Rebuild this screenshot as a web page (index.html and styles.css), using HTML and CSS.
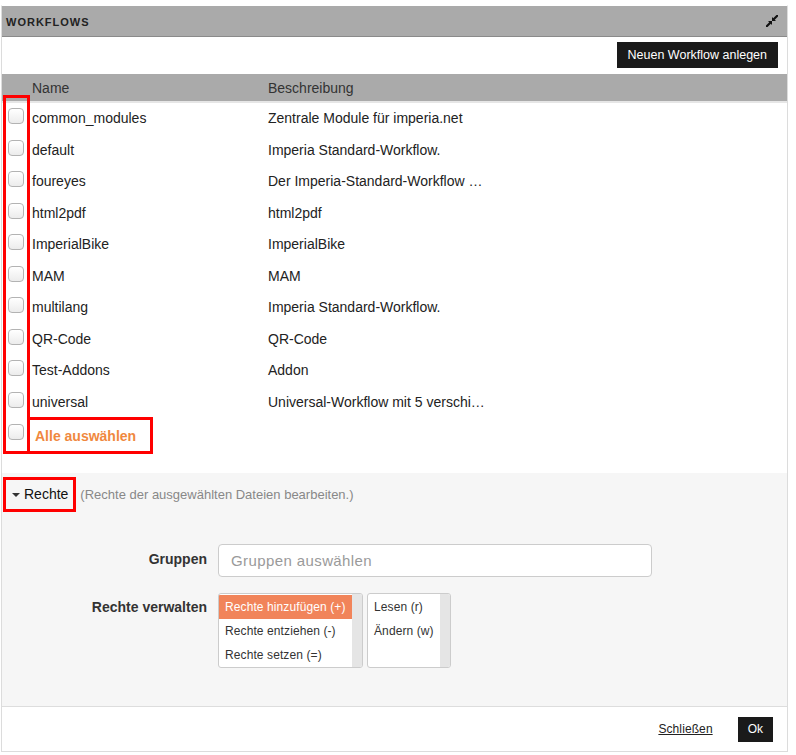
FILE: index.html
```html
<!DOCTYPE html>
<html lang="de">
<head>
<meta charset="utf-8">
<title>Workflows</title>
<link rel="stylesheet" href="styles.css">
</head>
<body>
<div class="page">
  <div class="panel">
    <div class="panel-head">
      <span class="panel-title">WORKFLOWS</span>
      <svg class="collapse-icon" width="12" height="12" viewBox="0 0 12 12" aria-hidden="true">
        <path d="M11.5 0.5 L8 4" stroke="#111" stroke-width="2.2" stroke-linecap="square"/>
        <polygon points="6,6 6,2 10,6" fill="#111"/>
        <path d="M0.5 11.5 L4 8" stroke="#111" stroke-width="2.2" stroke-linecap="square"/>
        <polygon points="6,6 6,10 2,6" fill="#111"/>
      </svg>
    </div>

    <div class="toolbar">
      <button class="btn-dark btn-new">Neuen Workflow anlegen</button>
    </div>

    <div class="list">
      <div class="list-head">
        <span></span>
        <span>Name</span>
        <span>Beschreibung</span>
      </div>
      <div class="row"><span class="cb"></span><span>common_modules</span><span>Zentrale Module für imperia.net</span></div>
      <div class="row"><span class="cb"></span><span>default</span><span>Imperia Standard-Workflow.</span></div>
      <div class="row"><span class="cb"></span><span>foureyes</span><span>Der Imperia-Standard-Workflow …</span></div>
      <div class="row"><span class="cb"></span><span>html2pdf</span><span>html2pdf</span></div>
      <div class="row"><span class="cb"></span><span>ImperialBike</span><span>ImperialBike</span></div>
      <div class="row"><span class="cb"></span><span>MAM</span><span>MAM</span></div>
      <div class="row"><span class="cb"></span><span>multilang</span><span>Imperia Standard-Workflow.</span></div>
      <div class="row"><span class="cb"></span><span>QR-Code</span><span>QR-Code</span></div>
      <div class="row"><span class="cb"></span><span>Test-Addons</span><span>Addon</span></div>
      <div class="row"><span class="cb"></span><span>universal</span><span>Universal-Workflow mit 5 verschi…</span></div>
      <div class="select-all"><span class="cb"></span><span class="select-all-label">Alle auswählen</span></div>
    </div>

    <div class="rights">
      <div class="rights-bar">
        <span class="toggle"><span class="caret"></span>Rechte</span>
        <span class="hint">(Rechte der ausgewählten Dateien bearbeiten.)</span>
      </div>
      <div class="form">
        <label class="form-label label-groups">Gruppen</label>
        <input class="groups-input" type="text" placeholder="Gruppen auswählen">
        <label class="form-label label-rights">Rechte verwalten</label>
        <div class="selects">
          <div class="listbox listbox-mode">
            <div class="options">
              <div class="option selected">Rechte hinzufügen (+)</div>
              <div class="option">Rechte entziehen (-)</div>
              <div class="option">Rechte setzen (=)</div>
            </div>
            <div class="scroll"></div>
          </div>
          <div class="listbox listbox-perm">
            <div class="options">
              <div class="option">Lesen (r)</div>
              <div class="option">Ändern (w)</div>
            </div>
            <div class="scroll"></div>
          </div>
        </div>
      </div>
    </div>

    <div class="footer">
      <a class="link" href="#">Schließen</a>
      <button class="btn-dark btn-ok">Ok</button>
    </div>

    <div class="mark mark-checks"></div>
    <div class="mark mark-all"></div>
    <div class="mark mark-toggle"></div>
  </div>
</div>
</body>
</html>
```

FILE: styles.css
```css
* { box-sizing: border-box; }

html, body {
  margin: 0;
  padding: 0;
  background: #fff;
  font-family: "Liberation Sans", Arial, sans-serif;
  color: #222;
}

.page {
  padding: 5px 0 0 1px;
}

.panel {
  position: relative;
  width: 787px;
  border: 1px solid #dcdcdc;
  border-top: 1px solid #fff;
  background: #fff;
}

.panel-head {
  height: 31px;
  background: #aaaaaa;
  border-bottom: 1px solid #8a8a8a;
  display: flex;
  align-items: center;
  justify-content: space-between;
  padding: 2px 9px 0 4px;
}

.panel-title {
  font-size: 11px;
  font-weight: bold;
  letter-spacing: 1px;
  color: #222;
}

.collapse-icon { display: block; margin-top: -3px; }

.toolbar {
  display: flex;
  justify-content: flex-end;
  padding: 5px 9px 6px 0;
}

.btn-dark {
  font-family: "Liberation Sans", Arial, sans-serif;
  font-size: 12px;
  color: #fff;
  background: #1a1a1a;
  border: 0;
  height: 26px;
  padding: 0 11px;
  border-radius: 0;
}

.btn-new {
  font-size: 12.5px;
  padding: 0 11px;
}

.list-head {
  display: grid;
  grid-template-columns: 30px 236px 1fr;
  height: 29px;
  background: #aaaaaa;
  border-bottom: 2px solid #e6e6e6;
  font-size: 14px;
  color: #333;
  line-height: 28px;
}

.row {
  display: grid;
  grid-template-columns: 30px 236px 1fr;
  height: 31.5px;
  font-size: 14px;
  line-height: 31px;
  color: #222;
  white-space: nowrap;
}

.cb {
  display: block;
  width: 16px;
  height: 16px;
  margin: 5px 0 0 6px;
  border: 1px solid #b3b3b3;
  border-radius: 4px;
  background: linear-gradient(#ffffff, #ececec);
}

.select-all {
  display: flex;
  align-items: flex-start;
  height: 34px;
  margin-bottom: 21px;
}

.select-all .cb { margin-top: 6px; }

.select-all-label {
  margin-left: 11px;
  padding-top: 9px;
  line-height: 18px;
  font-size: 14px;
  font-weight: bold;
  color: #f0883e;
}

.rights {
  background: #f6f6f6;
  padding: 4px 0 38px;
}

.rights-bar {
  display: flex;
  align-items: center;
  height: 34px;
}

.toggle {
  display: flex;
  align-items: center;
  height: 34px;
  padding: 0 6px 0 10px;
  font-size: 14px;
  color: #111;
}

.caret {
  width: 0;
  height: 0;
  border-top: 4px solid #333;
  border-left: 4px solid transparent;
  border-right: 4px solid transparent;
  margin: 1px 4px 0 0;
}

.hint {
  margin-left: 6px;
  font-size: 13px;
  color: #888;
}

.form {
  display: grid;
  grid-template-columns: 205px auto;
  column-gap: 11px;
  row-gap: 16px;
  margin-top: 33px;
  justify-content: start;
}

.form-label {
  text-align: right;
  font-size: 14px;
  font-weight: bold;
  color: #333;
}

.label-groups { line-height: 30px; }
.label-rights { line-height: 28px; }

.groups-input {
  width: 434px;
  height: 33px;
  border: 1px solid #cccccc;
  border-radius: 4px;
  background: #fff;
  padding: 0 12px;
  font-family: "Liberation Sans", Arial, sans-serif;
  font-size: 15px;
  letter-spacing: 0.4px;
  color: #333;
  outline: none;
}

.groups-input::placeholder { color: #9a9a9a; }

.selects {
  display: flex;
  gap: 4px;
}

.listbox {
  display: flex;
  height: 75px;
  border: 1px solid #cccccc;
  border-radius: 3px;
  background: #fff;
  overflow: hidden;
}

.listbox-mode { width: 145px; }
.listbox-perm { width: 84px; }

.options {
  flex: 1;
  padding-top: 1px;
}

.scroll {
  width: 10px;
  background: #e5e5e5;
}

.option {
  height: 24px;
  line-height: 24px;
  padding-left: 6px;
  font-size: 12px;
  letter-spacing: 0.1px;
  color: #333;
  white-space: nowrap;
}

.option.selected {
  background: #f1845a;
  color: #fff;
}

.footer {
  border-top: 1px solid #dddddd;
  height: 45px;
  display: flex;
  align-items: center;
  justify-content: flex-end;
  padding: 0 14px 0 0;
  gap: 25px;
}

.link {
  font-size: 12px;
  letter-spacing: 0.1px;
  color: #222;
  text-decoration: underline;
}

.btn-ok {
  height: 25px;
  padding: 0 10px;
}

.mark {
  position: absolute;
  border: 3px solid #ff0000;
  pointer-events: none;
}

.mark-checks { left: 1px; top: 89px; width: 27px; height: 359px; }
.mark-all { left: 25px; top: 411px; width: 126px; height: 37px; }
.mark-toggle { left: 1px; top: 471px; width: 73px; height: 35px; }
```
